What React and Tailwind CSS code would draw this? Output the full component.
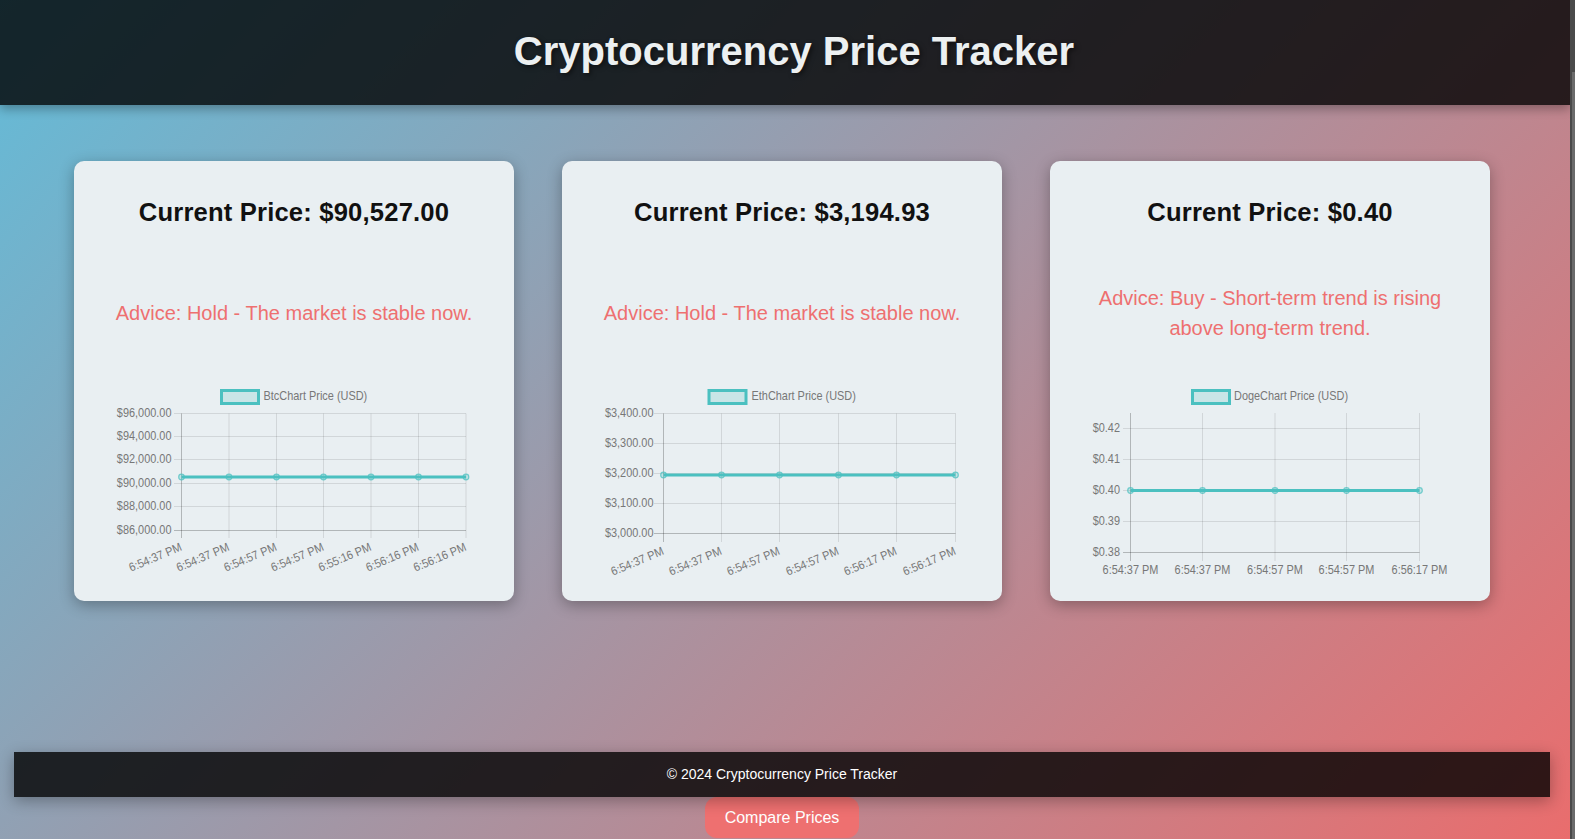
const FONT = '"Liberation Sans", Arial, sans-serif'

const charts = [
  {
    name: 'BtcChart Price (USD)',
    originX: 74,
    legendX: 220,
    textX: 263.5,
    xs: [181.5, 229, 276.5, 323.5, 371, 418.5, 466],
    ys: [413.5, 436.5, 459.5, 483.5, 506.5, 530.5],
    yLabels: ['$96,000.00', '$94,000.00', '$92,000.00', '$90,000.00', '$88,000.00', '$86,000.00'],
    lineY: 477,
    tickLeft: 174,
    labelEnd: 171.5,
    tickBottom: 538,
    xLabels: ['6:54:37 PM', '6:54:37 PM', '6:54:57 PM', '6:54:57 PM', '6:55:16 PM', '6:56:16 PM', '6:56:16 PM'],
    rotated: true,
  },
  {
    name: 'EthChart Price (USD)',
    originX: 562,
    legendX: 707.5,
    textX: 751.5,
    xs: [663.5, 721.5, 779.5, 838.5, 896.5, 955.5],
    ys: [413.5, 443.5, 473.5, 503.5, 533.5],
    yLabels: ['$3,400.00', '$3,300.00', '$3,200.00', '$3,100.00', '$3,000.00'],
    lineY: 475,
    tickLeft: 654,
    labelEnd: 653.5,
    tickBottom: 542,
    xLabels: ['6:54:37 PM', '6:54:37 PM', '6:54:57 PM', '6:54:57 PM', '6:56:17 PM', '6:56:17 PM'],
    rotated: true,
  },
  {
    name: 'DogeChart Price (USD)',
    originX: 1050,
    legendX: 1191,
    textX: 1234,
    xs: [1130.5, 1202.5, 1275, 1346.5, 1419.5],
    ys: [428.5, 459.5, 490.5, 521.5, 552.5],
    yLabels: ['$0.42', '$0.41', '$0.40', '$0.39', '$0.38'],
    lineY: 490.5,
    tickLeft: 1123,
    labelEnd: 1120,
    tickBottom: 561,
    top: 413,
    xLabels: ['6:54:37 PM', '6:54:37 PM', '6:54:57 PM', '6:54:57 PM', '6:56:17 PM'],
    rotated: false,
  },
]

const cards = [
  { price: '$90,527.00', advice: 'Advice: Hold - The market is stable now.', chart: charts[0] },
  { price: '$3,194.93', advice: 'Advice: Hold - The market is stable now.', chart: charts[1] },
  { price: '$0.40', advice: 'Advice: Buy - Short-term trend is rising above long-term trend.', chart: charts[2] },
]

function PriceChart({ chart }) {
  const { xs, ys } = chart
  const top = chart.top ?? ys[0]
  const bottom = ys[ys.length - 1]
  const right = xs[xs.length - 1]
  return (
    <svg width="440" height="216" viewBox={`${chart.originX} 385 440 216`} fontFamily={FONT} fontSize="12" fill="#777">
      <rect x={chart.legendX + 1.5} y="390.5" width="37" height="13" fill="rgba(75,192,192,0.2)" stroke="#4bc0c0" strokeWidth="3" />
      <text transform={`translate(${chart.textX} 400) scale(0.91 1)`}>{chart.name}</text>

      {xs.map((x, i) => (
        <line key={i} x1={x} x2={x} y1={top} y2={chart.tickBottom} stroke="rgba(0,0,0,0.1)" />
      ))}
      {ys.map((y, i) => (
        <g key={i}>
          <line x1={chart.tickLeft} x2={right} y1={y} y2={y} stroke="rgba(0,0,0,0.1)" />
          <text transform={`translate(${chart.labelEnd} ${y + 3.3}) scale(0.91 1)`} textAnchor="end">{chart.yLabels[i]}</text>
        </g>
      ))}
      <line x1={xs[0]} x2={xs[0]} y1={top} y2={chart.tickBottom} stroke="rgba(0,0,0,0.15)" />
      <line x1={chart.tickLeft} x2={right} y1={bottom} y2={bottom} stroke="rgba(0,0,0,0.15)" />

      {xs.map((x, i) =>
        chart.rotated ? (
          <text key={i} transform={`translate(${x + 1} ${chart.tickBottom + 12}) rotate(-23) scale(0.91 1)`} textAnchor="end">{chart.xLabels[i]}</text>
        ) : (
          <text key={i} transform={`translate(${x} 573.5) scale(0.91 1)`} textAnchor="middle">{chart.xLabels[i]}</text>
        )
      )}

      <line x1={xs[0]} x2={right} y1={chart.lineY} y2={chart.lineY} stroke="#4bc0c0" strokeWidth="3" />
      {xs.map((x, i) => (
        <circle key={i} cx={x} cy={chart.lineY} r="2.8" fill="rgba(75,192,192,0.25)" stroke="rgba(75,192,192,0.75)" strokeWidth="1.2" />
      ))}
    </svg>
  )
}

function PriceCard({ price, advice, chart }) {
  return (
    <div className="w-[440px] h-[440px] bg-[#e9eff2] rounded-[10px] shadow-[0_4px_15px_rgba(0,0,0,0.3)] flex flex-col items-center overflow-hidden">
      <h2 className="mt-[34px] h-[34px] text-[25.6px] leading-[34px] font-bold text-[#111] tracking-[0.18px]">Current Price: {price}</h2>
      <div className="h-[154px] w-full pt-[13px] px-[40px] flex items-center justify-center text-center text-[20px] leading-[30px] text-[#ee7070]">
        <p>{advice}</p>
      </div>
      <div className="mt-[2px]">
        <PriceChart chart={chart} />
      </div>
    </div>
  )
}

export default function App() {
  return (
    <div className="h-[839px] overflow-hidden flex" style={{ fontFamily: FONT }}>
      <div className="w-[1570px] flex flex-col bg-[linear-gradient(135deg,#62bcd9,#e96d6d)]">
        <header className="h-[105px] shrink-0 bg-black/80 shadow-[0_4px_10px_rgba(0,0,0,0.3)] flex items-center justify-center pl-[18px] pb-[4px]">
          <h1 className="text-[40px] font-bold text-[#ecf0f1] [text-shadow:2px_2px_5px_rgba(0,0,0,0.5)]">Cryptocurrency Price Tracker</h1>
        </header>
        <main className="mt-[56px] pl-[74px] flex gap-[48px]">
          {cards.map((card) => (
            <PriceCard key={card.chart.name} {...card} />
          ))}
        </main>
        <footer className="mt-[151px] ml-[14px] w-[1536px] h-[45px] shrink-0 bg-black/80 shadow-[0_4px_15px_rgba(0,0,0,0.3)] flex items-center justify-center text-[14px] text-white relative z-10">
          © 2024 Cryptocurrency Price Tracker
        </footer>
        <div className="pl-[705px]">
          <button className="w-[154px] h-[41px] rounded-[12px] bg-[#ee7070] text-white text-[16px]">Compare Prices</button>
        </div>
      </div>
      <div className="w-[5px] bg-[#4a4a4a] pt-[72px] pl-[2px]">
        <div className="h-full bg-[#6b6b6b]" />
      </div>
    </div>
  )
}
